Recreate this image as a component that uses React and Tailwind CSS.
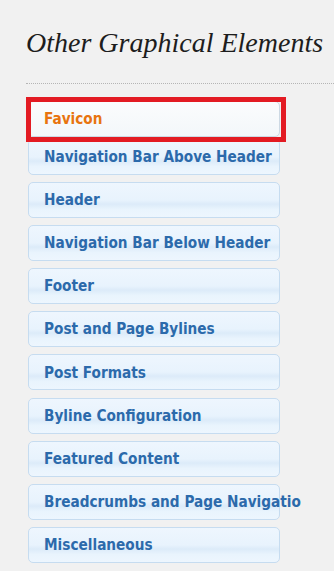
import React from "react";

const items = [
  "Navigation Bar Above Header",
  "Header",
  "Navigation Bar Below Header",
  "Footer",
  "Post and Page Bylines",
  "Post Formats",
  "Byline Configuration",
  "Featured Content",
  "Breadcrumbs and Page Navigatio",
  "Miscellaneous",
];

const tab =
  "flex h-[36px] w-[252px] items-center whitespace-nowrap rounded-[5px] border pl-[15px] pt-[1px] text-[15.2px] font-bold";

const App = () => {
  return (
    <div className="min-h-[571px] overflow-hidden bg-[#f1f1f1] pt-[26px]">
      <h2 className="ml-[26px] whitespace-nowrap font-['Liberation_Serif',serif] text-[28px] leading-[34px] text-[#1d1d1d] italic">
        Other Graphical Elements
      </h2>
      <div className="ml-[26px] mt-[23px] border-t border-dotted border-[#b5b5b5]" />

      <div
        className="ml-[28px] mt-[17px] flex flex-col font-['DejaVu_Sans_Condensed','DejaVu_Sans',sans-serif]"
        style={{ fontStretch: "condensed" }}
      >
        <div className="relative">
          <div
            className={`${tab} border-[#cdd9e4] bg-gradient-to-b from-[#fbfcfd] to-[#f3f7fa] text-[#e8740f]`}
          >
            Favicon
          </div>
          <span className="pointer-events-none absolute -top-[4px] -left-[2px] z-10 h-[45px] w-[260px] border-[5px] border-[#e31b23]" />
        </div>

        {items.map((label, i) => (
          <div
            key={label}
            className={`${tab} ${i === 0 ? "mt-[2px]" : "mt-[7.1px]"} border-[#c6dcf0] bg-[linear-gradient(to_bottom,#eef6fe_0%,#e8f3fd_50%,#dcebf9_62%,#e9f4fd_78%,#edf6fe_100%)] text-[#2c6aab]`}
          >
            {label}
          </div>
        ))}
      </div>
    </div>
  );
};

export default App;
